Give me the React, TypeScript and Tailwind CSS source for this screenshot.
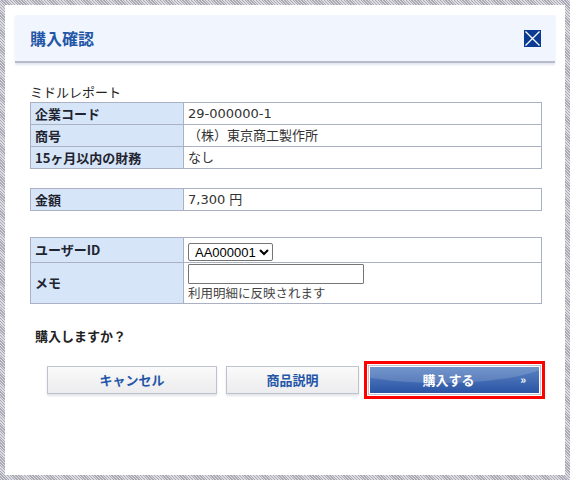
import { useState } from "react";

const jp = { fontFamily: '"Noto Sans CJK JP", "Noto Sans", sans-serif' };
const wide = { fontFamily: '"DejaVu Sans", "Noto Sans CJK JP", sans-serif' };

function CloseIcon() {
  return (
    <svg width="17" height="17" viewBox="0 0 17 17">
      <rect width="17" height="17" fill="#0b3a92" />
      <path d="M1.5 1.5l14 14M15.5 1.5l-14 14" stroke="#fff" strokeWidth="1.3" />
    </svg>
  );
}

function InfoRow({ label, children }: { label: string; children: React.ReactNode }) {
  return (
    <tr className="h-[22px]">
      <th className="w-[153px] border border-[#a9b1c2] bg-[#d6e6f8] px-[4px] text-left align-middle text-[13px] font-bold text-[#1f2430]">
        {label}
      </th>
      <td className="border border-[#a9b1c2] bg-white px-[4px] align-middle text-[13px] text-[#333]" style={wide}>
        {children}
      </td>
    </tr>
  );
}

export default function App() {
  const [memo, setMemo] = useState("");
  const [user, setUser] = useState("AA000001");

  return (
    <div
      className="h-[480px] w-[570px] bg-[repeating-linear-gradient(45deg,#a9aab4_0px,#a9aab4_1px,#dcdce2_1px,#dcdce2_2px)] p-[5px]"
      style={jp}
    >
      <div className="h-full w-full bg-white px-[10px] pt-[10px]">
        {/* title bar */}
        <div className="flex h-[48px] items-center justify-between border-b-2 border-[#b7bbcb] bg-[#f1f6fe] pl-[15px] pr-[14px] shadow-[0_2px_2px_#e3e6ef]">
          <h1 className="text-[16px] font-bold text-[#2456a8]">購入確認</h1>
          <CloseIcon />
        </div>

        <div className="pl-[15px] pr-[13px] pt-[19px]">
          <p className="text-[13px] leading-[20px] text-[#222]">ミドルレポート</p>
          <table className="w-[512px] border-collapse">
            <tbody>
              <InfoRow label="企業コード">29-000000-1</InfoRow>
              <InfoRow label="商号">（株）東京商工製作所</InfoRow>
              <InfoRow label="15ヶ月以内の財務">なし</InfoRow>
            </tbody>
          </table>

          <table className="mt-[19px] w-[512px] border-collapse">
            <tbody>
              <InfoRow label="金額">7,300 円</InfoRow>
            </tbody>
          </table>

          <table className="mt-[26px] w-[512px] border-collapse">
            <tbody>
              <tr className="h-[25px]">
                <th className="w-[153px] border border-[#a9b1c2] bg-[#d6e6f8] px-[4px] text-left text-[13px] font-bold text-[#1f2430]">
                  ユーザーID
                </th>
                <td className="border border-[#a9b1c2] px-[4px] align-middle">
                  <select
                    value={user}
                    onChange={(e) => setUser(e.target.value)}
                    className="h-[18px] rounded-[2px] border border-[#767676] pl-[2px] text-[13px] leading-[16px] text-black"
                    style={{ fontFamily: '"Liberation Sans", Arial, sans-serif' }}
                  >
                    <option>AA000001</option>
                    <option>AA000002</option>
                  </select>
                </td>
              </tr>
              <tr className="h-[41px]">
                <th className="border border-[#a9b1c2] bg-[#d6e6f8] px-[4px] text-left text-[13px] font-bold text-[#1f2430]">
                  メモ
                </th>
                <td className="border border-[#a9b1c2] px-[4px] pt-[1px] align-top">
                  <input
                    value={memo}
                    onChange={(e) => setMemo(e.target.value)}
                    className="block h-[20px] w-[176px] rounded-[1px] border border-[#767676] px-1 text-[13px]"
                  />
                  <div className="text-[12.5px] leading-[17px] text-[#444]">利用明細に反映されます</div>
                </td>
              </tr>
            </tbody>
          </table>

          <p className="mt-[22px] pl-[5px] text-[13px] font-bold text-[#222]">購入しますか？</p>
        </div>

        {/* action buttons */}
        <div className="mt-[15px] flex items-center pl-[32px]">
          <button className="h-[28px] w-[170px] border border-[#bfc3cf] bg-[linear-gradient(#fafafa,#ececee)] text-[13px] font-bold text-[#2456a8] shadow-[0_2px_2px_#e2e3e8]">
            キャンセル
          </button>
          <button className="ml-[9px] h-[28px] w-[133px] border border-[#bfc3cf] bg-[linear-gradient(#fafafa,#ececee)] text-[13px] font-bold text-[#2456a8] shadow-[0_2px_2px_#e2e3e8]">
            商品説明
          </button>
          <div className="ml-[5px] border-[3px] border-[#ff0000] bg-white p-[1px]">
            <div className="border border-[#c3c6d2] p-[1px]">
              <button className="relative flex h-[26px] w-[169px] items-center justify-center overflow-hidden bg-[linear-gradient(#5b83c3,#2b55a5)] pr-[12px] text-[13px] font-bold text-white">
                <span className="absolute -left-[40px] -top-[30px] h-[46px] w-[220px] rounded-[50%] bg-white/15" />
                <span className="relative">購入する</span>
                <span className="absolute right-[13px] top-[5px] text-[11px] leading-[14px] text-white">»</span>
              </button>
            </div>
          </div>
        </div>
      </div>
    </div>
  );
}
